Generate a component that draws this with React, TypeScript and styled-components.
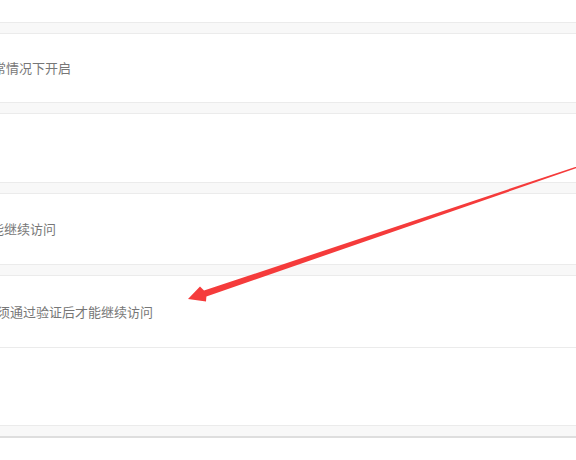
import React from "react";
import styled, { createGlobalStyle } from "styled-components";

const Global = createGlobalStyle`
  html, body { margin: 0; padding: 0; background: #fff; }
  body { width: 576px; height: 460px; overflow: hidden; font-family: "Noto Sans CJK SC", "Noto Sans", sans-serif; }
`;

const Page = styled.div`
  position: relative;
  width: 576px;
  height: 460px;
  overflow: hidden;
  display: flex;
  flex-direction: column;
`;

const Spacer = styled.div<{ $h: number }>`
  height: ${(p) => p.$h}px;
  flex: none;
`;

const Band = styled.div<{ $strong?: boolean }>`
  flex: none;
  height: 10px;
  background: #f8f8f8;
  border-top: 1px solid #ebebeb;
  border-bottom: ${(p) => (p.$strong ? "2px solid #dedede" : "1px solid #ebebeb")};
`;

const Row = styled.div<{ $h: number; $line?: boolean }>`
  flex: none;
  height: ${(p) => p.$h}px;
  display: flex;
  align-items: center;
  border-bottom: ${(p) => (p.$line ? "1px solid #ebebeb" : "none")};
  white-space: nowrap;
`;

const Desc = styled.span<{ $shift: number }>`
  margin-left: ${(p) => p.$shift}px;
  font-size: 13px;
  line-height: 18px;
  color: #777;
`;

const Overlay = styled.svg`
  position: absolute;
  left: 0;
  top: 0;
  pointer-events: none;
`;

export default function App() {
  return (
    <>
      <Global />
      <Page>
        <Spacer $h={22} />
        <Band />
        <Row $h={68}>
          <Desc $shift={-20}>异常情况下开启</Desc>
        </Row>
        <Band />
        <Row $h={68} />
        <Band />
        <Row $h={70}>
          <Desc $shift={-22}>才能继续访问</Desc>
        </Row>
        <Band />
        <Row $h={71} $line>
          <Desc $shift={-16}>必须通过验证后才能继续访问</Desc>
        </Row>
        <Spacer $h={77} />
        <Band $strong />
        <Overlay width="576" height="460" viewBox="0 0 576 460">
          <polygon
            fill="#f53b3b"
            points="188,299 200,286.5 204,290.6 590,162 590.5,163.2 206.4,296.5 206,301.5"
          />
        </Overlay>
      </Page>
    </>
  );
}
